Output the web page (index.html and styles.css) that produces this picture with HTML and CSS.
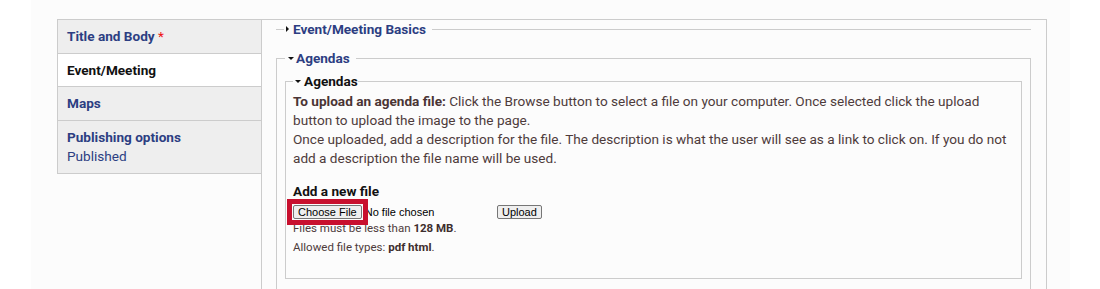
FILE: index.html
```html
<!DOCTYPE html>
<html lang="en">
<head>
<meta charset="utf-8">
<title>Event/Meeting</title>
<link rel="stylesheet" href="styles.css">
</head>
<body>
<div class="page">
  <div class="vtabs">
    <ul class="tab-list">
      <li class="tab"><span class="tab-title">Title and Body <span class="req">*</span></span></li>
      <li class="tab selected"><span class="tab-title">Event/Meeting</span></li>
      <li class="tab"><span class="tab-title">Maps</span></li>
      <li class="tab"><span class="tab-title">Publishing options</span><span class="tab-summary">Published</span></li>
    </ul>
    <div class="pane">
      <fieldset class="group collapsed">
        <legend class="group-legend"><span class="tri-right"></span>Event/Meeting Basics</legend>
      </fieldset>
      <fieldset class="group open">
        <legend class="group-legend"><span class="tri-down"></span>Agendas</legend>
        <fieldset class="sub">
          <legend class="sub-legend"><span class="tri-down dark"></span>Agendas</legend>
          <div class="help"><strong>To upload an agenda file:</strong> Click the Browse button to select a file on your computer. Once selected click the upload button to upload the image to the page.<br>Once uploaded, add a description for the file. The description is what the user will see as a link to click on. If you do not add a description the file name will be used.</div>
          <div class="add-label">Add a new file</div>
          <div class="file-row">
            <span class="file-input">
              <span class="choose-wrap"><button class="btn" type="button">Choose File</button><span class="highlight"></span></span><span class="no-file">No file chosen</span>
            </span>
            <button class="btn" type="button">Upload</button>
          </div>
          <div class="desc">Files must be less than <strong>128 MB</strong>.</div>
          <div class="desc">Allowed file types: <strong>pdf html</strong>.</div>
        </fieldset>
      </fieldset>
    </div>
  </div>
</div>
</body>
</html>
```

FILE: styles.css
```css
* {
  box-sizing: border-box;
}

html, body {
  margin: 0;
  padding: 0;
  background: #ffffff;
  overflow: hidden;
}

body {
  font-family: Roboto, "Liberation Sans", Arial, sans-serif;
  font-size: 13.6px;
  line-height: 19px;
  color: #4e3b3b;
}

.page {
  margin-left: 31px;
  width: 1039px;
  height: 289px;
  padding-top: 19px;
  background: #fcfcfc;
}

.vtabs {
  margin-left: 26px;
  width: 990px;
  display: flex;
  align-items: flex-start;
  border-top: 1px solid #cccccc;
  border-right: 1px solid #cccccc;
  min-height: 300px;
}

.tab-list {
  list-style: none;
  margin: 0;
  padding: 0;
  width: 204px;
  flex: none;
  border-left: 1px solid #cccccc;
}

.tab {
  background: #eeeeee;
  border-bottom: 1px solid #cccccc;
  padding: 7px 9px 6.7px;
}

.tab.selected {
  background: #ffffff;
}

.tab-title {
  display: block;
  font-weight: 700;
  color: #2c3e82;
}

.tab.selected .tab-title {
  color: #111111;
}

.req {
  color: #ee1111;
  font-weight: 400;
}

.tab-summary {
  display: block;
  color: #2c3e82;
}

.pane {
  flex: 1;
  align-self: stretch;
  border-left: 1px solid #cccccc;
  padding: 0 15px 0 14px;
}

.group {
  margin: 0;
  min-width: 0;
  border: 1px solid #cccccc;
}

.group.collapsed {
  border-width: 1px 0 0;
  padding: 0 0 0 8px;
  margin-bottom: 10px;
}

.group.open {
  padding: 4px 8px 30px;
}

.group-legend {
  padding: 0 6px 0 3px;
  font-weight: 700;
  color: #2c3e82;
}

.group.collapsed .group-legend {
  padding-left: 2px;
}

.sub {
  margin: 0;
  min-width: 0;
  border: 1px solid #cccccc;
  padding: 1px 7px 21px;
}

.sub-legend {
  padding: 0 0 0 2px;
  font-weight: 700;
  color: #111111;
}

.tri-right {
  display: inline-block;
  width: 0;
  height: 0;
  border-top: 3px solid transparent;
  border-bottom: 3px solid transparent;
  border-left: 3px solid #111111;
  margin-right: 4px;
  vertical-align: 2px;
}

.tri-down {
  display: inline-block;
  width: 0;
  height: 0;
  border-left: 3px solid transparent;
  border-right: 3px solid transparent;
  border-top: 3px solid #111111;
  margin-right: 2px;
  vertical-align: 3px;
}

.tri-down.dark {
  margin-right: 3px;
}

.help strong {
  color: #4a3434;
}

.add-label {
  margin-top: 14px;
  font-weight: 700;
  color: #111111;
}

.file-row {
  display: flex;
  align-items: flex-start;
  height: 18px;
}

.file-input {
  display: flex;
  align-items: flex-start;
  width: 204px;
  flex: none;
}

.choose-wrap {
  position: relative;
  display: inline-block;
  margin-top: 4px;
}

.btn {
  display: block;
  height: 14px;
  margin: 0;
  padding: 0 4px;
  font-family: "Liberation Sans", Arial, sans-serif;
  font-size: 11px;
  line-height: 12px;
  color: #000000;
  background: #efefef;
  border: 1px solid #767676;
  border-radius: 2px;
}

.file-row > .btn {
  margin-top: 4px;
}

.highlight {
  position: absolute;
  left: -6px;
  top: -6px;
  width: 81px;
  height: 26px;
  border: 5px solid #c8102e;
}

.no-file {
  margin-left: 3px;
  margin-top: 5px;
  font-family: "Liberation Sans", Arial, sans-serif;
  font-size: 11px;
  line-height: 12px;
  color: #000000;
}

.desc {
  font-size: 11.5px;
  line-height: 19px;
}

.desc strong {
  color: #3e2e2e;
}
```
